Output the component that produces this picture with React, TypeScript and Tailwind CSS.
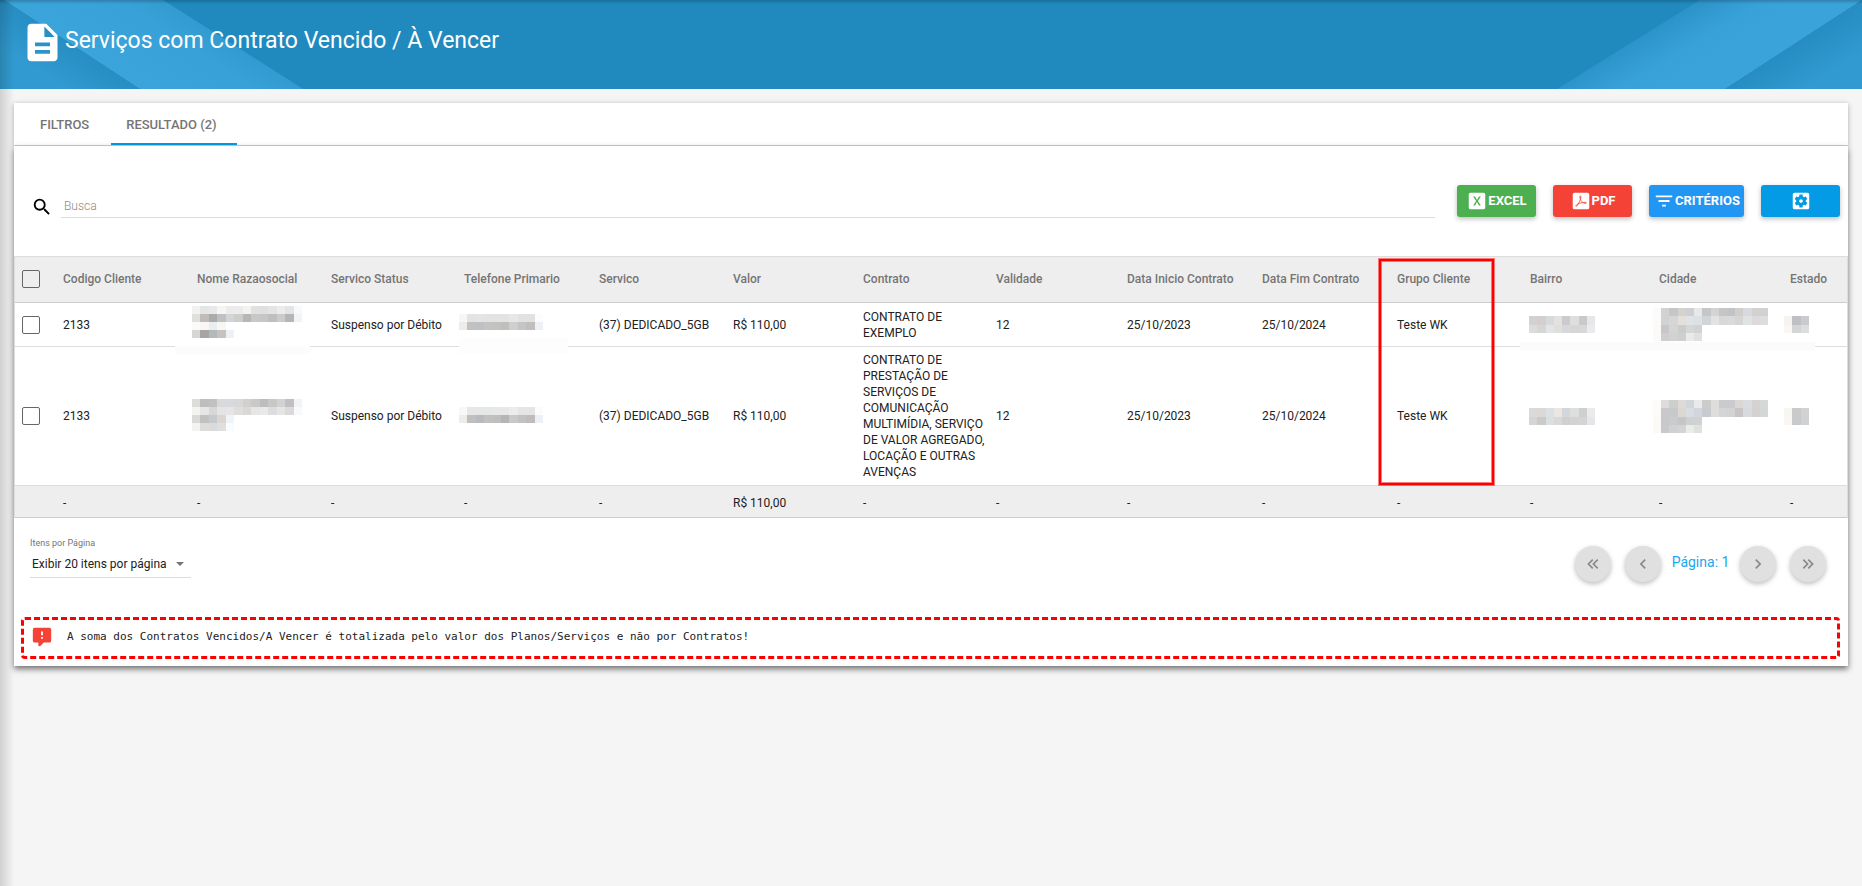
import type { ReactNode } from 'react';
import {
  MdChevronLeft,
  MdChevronRight,
  MdDescription,
  MdFilterList,
  MdSearch,
  MdSettingsApplications,
} from 'react-icons/md';

const columns = [
  { label: 'Codigo Cliente', width: 134 },
  { label: 'Nome Razaosocial', width: 134 },
  { label: 'Servico Status', width: 133 },
  { label: 'Telefone Primario', width: 135 },
  { label: 'Servico', width: 134 },
  { label: 'Valor', width: 130 },
  { label: 'Contrato', width: 133 },
  { label: 'Validade', width: 131 },
  { label: 'Data Inicio Contrato', width: 135 },
  { label: 'Data Fim Contrato', width: 135 },
  { label: 'Grupo Cliente', width: 133 },
  { label: 'Bairro', width: 129 },
  { label: 'Cidade', width: 131 },
  { label: 'Estado', width: 63 },
];

// Blocos de cor dos dados ocultos, uma string por linha ("." = vazio)
const nome1 = [
  'f2f2f0 e3e5e6 e6e8e9 f5f5f3 ebebec ececec f3f3f1 e1e1df dfdfdd e4e4e4 ececec e3e4e4 f8f9fb',
  'dfe0dd c1bcba acabab bfc0c2 d2d5d8 cdcdcb b9b6b4 c7c8c8 c5c7c6 c0bec0 c9cbcc b6b6b6 f1f3f6',
  'fafafa f8f7f6 ebeeef f7f7f5 . . . . . . . . .',
  'd6d6d2 a7a4a4 b3b9bb c6c2c0 ebf1f5 . . . . . . . .',
];
const nome2 = [
  'dcdcd8 bfbebf c2c0c1 d8d9da d7d9dd d8d8d8 d3cfcc c9c9c9 bdbdbe c7c7c6 d0d2d4 c1bfc1 f1f3f6',
  'f3f3f2 e7e6e6 d7d7d6 e4e4e5 e5e5e7 dfdedd d8d8d9 e6e6e6 e7eae9 dedcde e5e5e6 dadadc f8f9fa',
  'dadbd6 c1c1bf c4cacd dad7d2 f0f4f8 . . . . . . . .',
  'f3f3f1 dcdcdb d9dad9 dfdfdd f9fbfc . . . . . . . .',
];
const fone1 = [
  'f6f6f4 e2e4e3 e4e5e5 e3e3e3 e3e3e2 e3e3e1 e7e7e7 e2e2e3 e1e1e1 fafcfe',
  'efebe8 c3c1c0 bec0c5 c5c4c3 c2c2c1 bfbfbd ced0cf c7c5c4 c0bfbd edf1f5',
];
const fone2 = [
  'f8f8f6 e7e7e7 e6e8e8 e6e8e8 e8e8e7 e8e8e8 ececea e5e5e6 e5e5e5 fafcfe',
  'efebe8 c0bfbd b8babd c2c1bf bfbfbd b6b5b4 c7c9ca c4c2c0 bfbdbc edf1f5',
];
const bairro1 = ['d1d1d1 d4cfcc d7dadd e6e1dc c9cbcf dddfde c9c9ca e6e7e8', 'dcdcdb d5d6d6 e2e4e6 dedfdf d7d8d9 d6d6d6 d8d8d9 ebebed'];
const bairro2 = ['d9dad9 dbd8d6 dbe0e2 ebe6e2 d3d6da dddede cfcfcf ebebed', 'd5d5d4 c9cac9 dadfe0 d9dad8 d0d0d0 d3d3d2 d3d4d5 e5e6e7'];
const cidade1 = [
  'fcfbf9 d2d2d2 c5c6c7 d5d1ce ccd0d5 e7e8e8 c5c6c8 d5d4d5 c4c5c6 c2c3c4 d0cfce d7dade d3d1d0 d0d2d1',
  'fcfbf9 d1d2d2 d6d6d7 e4dfd9 dfe3e6 dde1e5 d0d5d9 e4e3e2 d9d8d7 dadadb d7d4d6 e0e2e4 dddad9 dcdedc',
  'fbfaf7 c7c7c9 d3d5d5 cdcccd d5d6d7 d1d3d2 . . . . . . . .',
  'fbfaf7 cfcdce d1d2d2 cfcfd0 e9ebea dfe0e0 . . . . . . . .',
];
const cidade2 = [
  'fcfbf9 dbdcdb cececd dedad7 d2d6da e9eaeb cdccca dedddb cacbcd cacbcf dad7d6 d9dce1 d5d2d1 d5d8d6',
  'fcfbf9 c9c8ca c7cacc dcd7d3 d8dde3 d2d5dc c7cacf dddddb d5d5d6 d2d3d2 c8c5c7 d8dadf d4d1d0 d5d7d6',
  'fbfaf7 c8c8ca cacbcc c6c6c7 cfd0d1 d0d1d1 . . . . . . . .',
  'fbfaf7 c9c9ca d0d1d1 d3d4d3 eaecea dfe0e0 . . . . . . . .',
];
const estado1 = ['f7f4f0 bec0c5 cacbcd', 'faf6f4 d4d5d5 dcdddd'];
const estado2 = ['f8f6f3 cacacb d1d2d3', 'faf6f3 c8c9ca d0d1d2'];

function Mosaic({ rows, width, height }: { rows: string[]; width: number; height: number }) {
  const cells = rows.map((row) => row.split(' '));
  return (
    <svg
      width={width}
      height={height}
      viewBox={`0 0 ${cells[0].length} ${cells.length}`}
      preserveAspectRatio="none"
      shapeRendering="crispEdges"
      className="block max-w-none"
      aria-hidden="true"
    >
      {cells.map((row, y) =>
        row.map((color, x) =>
          color === '.' ? null : <rect key={`${x}-${y}`} x={x} y={y} width="1" height="1" fill={`#${color}`} />
        )
      )}
    </svg>
  );
}

const rows = [
  {
    contrato: 'CONTRATO DE EXEMPLO',
    height: 'h-11',
    masked: 'pb-1.5',
    nome: nome1,
    fone: fone1,
    bairro: bairro1,
    cidade: cidade1,
    estado: estado1,
  },
  {
    contrato: 'CONTRATO DE PRESTAÇÃO DE SERVIÇOS DE COMUNICAÇÃO MULTIMÍDIA, SERVIÇO DE VALOR AGREGADO, LOCAÇÃO E OUTRAS AVENÇAS',
    height: 'h-[139px]',
    masked: 'pb-0.5',
    nome: nome2,
    fone: fone2,
    bairro: bairro2,
    cidade: cidade2,
    estado: estado2,
  },
];

function HeaderArt() {
  return (
    <>
      <svg className="absolute left-0 top-0" width="310" height="89" viewBox="0 0 310 89" aria-hidden="true">
        <defs>
          <linearGradient id="leftBand" gradientUnits="userSpaceOnUse" x1="90" y1="60" x2="150" y2="-30">
            <stop offset="0" stopColor="#3ba4da" />
            <stop offset="0.6" stopColor="#38a1d7" />
            <stop offset="1" stopColor="#2f97cc" />
          </linearGradient>
          <linearGradient id="leftCorner" gradientUnits="userSpaceOnUse" x1="72" y1="44" x2="50" y2="78">
            <stop offset="0" stopColor="#278dc2" />
            <stop offset="1" stopColor="#319ad0" />
          </linearGradient>
        </defs>
        <path d="M4 0H163L303 89H140Z" fill="url(#leftBand)" />
        <path d="M0 0H4L140 89H0Z" fill="url(#leftCorner)" />
      </svg>
      <svg className="absolute right-0 top-0" width="310" height="89" viewBox="0 0 310 89" aria-hidden="true">
        <defs>
          <linearGradient id="rightBand" gradientUnits="userSpaceOnUse" x1="75" y1="44" x2="104" y2="92">
            <stop offset="0" stopColor="#2c93c9" />
            <stop offset="0.6" stopColor="#38a1d7" />
            <stop offset="1" stopColor="#3aa3d9" />
          </linearGradient>
          <linearGradient id="rightCorner" gradientUnits="userSpaceOnUse" x1="240" y1="44" x2="264" y2="82">
            <stop offset="0" stopColor="#268cc1" />
            <stop offset="1" stopColor="#319ad0" />
          </linearGradient>
        </defs>
        <path d="M148 0H310L173 89H5Z" fill="url(#rightBand)" />
        <path d="M310 0V89H173Z" fill="url(#rightCorner)" />
      </svg>
    </>
  );
}

function ExcelIcon() {
  return (
    <svg width="22" height="22" viewBox="0 0 24 24" fill="currentColor" aria-hidden="true">
      <path d="M16.2 17H14.2L12 13.2L9.8 17H7.8L11 12L7.8 7H9.8L12 10.8L14.2 7H16.2L13 12M19 3H5C3.89 3 3 3.89 3 5V19A2 2 0 0 0 5 21H19A2 2 0 0 0 21 19V5C21 3.89 20.1 3 19 3Z" />
    </svg>
  );
}

function PdfIcon() {
  return (
    <svg width="22" height="22" viewBox="0 0 24 24" aria-hidden="true">
      <rect x="3" y="3" width="18" height="18" rx="2" fill="currentColor" />
      <path
        d="M11.3 6.3C10.3 6.5 10.7 8.6 11.3 10C12.1 12 13.6 13.8 15.4 14.4C16.6 14.8 17.9 14.8 17.9 14.1C17.9 13.2 15.4 13.3 13.4 13.7C11.4 14.1 9.1 14.8 7.7 15.7C6.5 16.5 6 17.4 6.5 17.7C7.3 18.1 8.7 16 9.8 13.8C10.9 11.7 11.9 9 11.9 7.4C11.9 6.7 11.7 6.3 11.3 6.3Z"
        fill="none"
        stroke="#f44336"
        strokeWidth="0.9"
      />
    </svg>
  );
}

function DoubleChevron({ right }: { right?: boolean }) {
  return (
    <svg width="20" height="20" viewBox="0 0 24 24" fill="currentColor" className={right ? 'rotate-180' : ''} aria-hidden="true">
      <path d="M18.41 7.41L17 6L11 12L17 18L18.41 16.59L13.83 12L18.41 7.41M12.41 7.41L11 6L5 12L11 18L12.41 16.59L7.83 12L12.41 7.41Z" />
    </svg>
  );
}

function ActionButton({ className, label, children }: { className: string; label?: string; children: ReactNode }) {
  return (
    <button
      type="button"
      aria-label={label}
      className={`flex h-8 shrink-0 items-center justify-center rounded-[3px] text-[13px] font-bold text-white shadow-[0_2px_5px_rgba(0,0,0,0.26)] ${className}`}
    >
      {children}
    </button>
  );
}

function PageButton({ label, children }: { label: string; children: ReactNode }) {
  return (
    <button
      type="button"
      aria-label={label}
      className="flex size-9 items-center justify-center rounded-full bg-[#e0e0e0] text-[#8a8a8a] shadow-[0_2px_5px_rgba(0,0,0,0.26)]"
    >
      {children}
    </button>
  );
}

function Checkbox({ label }: { label: string }) {
  return (
    <input
      type="checkbox"
      aria-label={label}
      className="ml-[7px] block size-[18px] appearance-none rounded-[2px] border border-[#666] bg-transparent"
    />
  );
}

export default function App() {
  return (
    <div className="relative min-h-screen bg-[#f5f5f5] font-['Roboto',sans-serif] text-[#212121]">
      <header className="relative h-[89px] overflow-hidden bg-[#208abf]">
        <HeaderArt />
        <div className="relative flex items-start pl-5 pt-5 text-white">
          <MdDescription size={45} />
          <h1 className="text-[23px] leading-[42px]">Serviços com Contrato Vencido / À Vencer</h1>
        </div>
        <div className="absolute inset-x-0 top-0 h-1 bg-linear-to-b from-black/20 to-transparent" />
      </header>

      <main className="mx-3.5 mt-3.5">
        <div role="tablist" className="flex h-[43px] border-b border-[#cfcfcf] bg-white pl-[2px] text-[13px] font-medium text-[#757575] shadow-[0_1px_5px_rgba(0,0,0,0.3)]">
          <button type="button" role="tab" aria-selected="false" className="pl-6 pr-[22px] pt-[2px]">
            FILTROS
          </button>
          <button type="button" role="tab" aria-selected="true" className="border-b-2 border-[#039be5] pl-[15px] pr-5 pt-1">
            RESULTADO (2)
          </button>
        </div>

        <section className="relative bg-white pb-[7px] shadow-[0_3px_6px_rgba(0,0,0,0.55)]">
          <div className="flex items-end pb-[38px] pl-[17px] pr-2 pt-[39px]">
            <MdSearch size={22} className="shrink-0 text-black" />
            <input
              type="text"
              aria-label="Busca"
              placeholder="Busca"
              className="ml-2 h-6 min-w-0 flex-1 border-b border-[#ddd] bg-transparent px-[3px] text-xs font-light outline-none placeholder:text-[#8a8a8a]"
            />
            <div className="mb-px ml-[22px] flex gap-[17px]">
              <ActionButton className="w-[79px] bg-[#4caf50]">
                <ExcelIcon />
                EXCEL
              </ActionButton>
              <ActionButton className="w-[79px] bg-[#f44336]">
                <PdfIcon />
                PDF
              </ActionButton>
              <ActionButton className="w-[95px] bg-[#2196f3]">
                <MdFilterList size={22} />
                CRITÉRIOS
              </ActionButton>
              <ActionButton className="w-[79px] bg-[#039be5]" label="Configurações">
                <MdSettingsApplications size={22} />
              </ActionButton>
            </div>
          </div>

          <div className="border-x border-t border-[#ddd]">
            <table className="w-full table-fixed border-separate border-spacing-0 text-left text-xs leading-4">
              <colgroup>
                <col style={{ width: 42 }} />
                {columns.map((column) => (
                  <col key={column.label} style={{ width: column.width }} />
                ))}
              </colgroup>
              <thead className="bg-[#eee] text-[#757575]">
                <tr className="h-[46px]">
                  <th className="border-b border-[#ccc] p-0 pb-0.5">
                    <Checkbox label="Selecionar todos" />
                  </th>
                  {columns.map((column) => (
                    <th key={column.label} className="relative whitespace-nowrap border-b border-[#ccc] px-1.5 pb-0.5 pt-0 font-medium">
                      {column.label}
                      {column.label === 'Grupo Cliente' && (
                        <span className="absolute -left-3 top-0.5 z-10 h-[226px] w-[115px] border-2 border-[#f00] shadow-[0_0_0_1px_rgba(255,0,0,0.5),inset_0_0_0_1px_rgba(255,0,0,0.5)]" />
                      )}
                    </th>
                  ))}
                </tr>
              </thead>
              <tbody className="[&_td]:border-b [&_td]:border-[#ddd]">
                {rows.map((row, i) => (
                  <tr key={row.contrato} className={row.height}>
                    <td>
                      <Checkbox label={`Selecionar linha ${i + 1}`} />
                    </td>
                    <td className="px-1.5">2133</td>
                    <td className={`relative pl-px ${row.masked}`}>
                      <Mosaic rows={row.nome} width={110} height={32} />
                      {i === 0 && <span className="absolute -bottom-2 -left-4 z-10 h-2 w-[135px] bg-[#fcfcfc]" />}
                    </td>
                    <td className="whitespace-nowrap px-1.5">Suspenso por Débito</td>
                    <td className={`relative pl-px ${row.masked}`}>
                      <Mosaic rows={row.fone} width={84} height={16} />
                      {i === 0 && <span className="absolute -bottom-2 left-px z-10 h-4 w-[109px] bg-[#fdfdfd]" />}
                    </td>
                    <td className="whitespace-nowrap px-1.5">(37) DEDICADO_5GB</td>
                    <td className="px-1.5">R$ 110,00</td>
                    <td className="pl-1.5">{row.contrato}</td>
                    <td className="px-1.5">12</td>
                    <td className="px-1.5">25/10/2023</td>
                    <td className="px-1.5">25/10/2024</td>
                    <td className="px-1.5">Teste WK</td>
                    <td className="relative pl-[5px]">
                      <Mosaic rows={row.bairro} width={66} height={17} />
                      {i === 0 && <span className="absolute -bottom-1 -left-1 z-10 h-2 w-[295px] bg-[#fbfbfb]" />}
                    </td>
                    <td>
                      <Mosaic rows={row.cidade} width={115} height={33} />
                    </td>
                    <td>
                      <Mosaic rows={row.estado} width={25} height={17} />
                    </td>
                  </tr>
                ))}
              </tbody>
              <tfoot className="bg-[#eee] [&_td]:border-b [&_td]:border-[#ccc]">
                <tr className="h-8">
                  <td />
                  {columns.map((column) => (
                    <td key={column.label} className="px-1.5 pt-0.5">
                      {column.label === 'Valor' ? 'R$ 110,00' : '-'}
                    </td>
                  ))}
                </tr>
              </tfoot>
            </table>
          </div>

          <div className="flex items-start justify-between pb-[35px] pl-4 pr-[22px] pt-[18px]">
            <div className="flex w-[161px] flex-col">
              <label htmlFor="itens" className="text-[9px] leading-[15px] text-[#757575]">
                Itens por Página
              </label>
              <div className="relative">
                <select id="itens" className="h-[27px] w-full appearance-none border-b border-[#ddd] bg-transparent pl-[2px] text-xs outline-none">
                  <option>Exibir 20 itens por página</option>
                </select>
                <svg width="8" height="4" viewBox="0 0 8 4" fill="#757575" className="pointer-events-none absolute right-[7px] top-[11px]" aria-hidden="true">
                  <path d="M0 0H8L4 4Z" />
                </svg>
              </div>
            </div>

            <nav aria-label="Paginação" className="flex items-center pt-2.5">
              <PageButton label="Primeira página">
                <DoubleChevron />
              </PageButton>
              <span className="w-3.5" />
              <PageButton label="Página anterior">
                <MdChevronLeft size={20} />
              </PageButton>
              <span className="w-[79px] pb-1 text-center text-sm text-[#1ba5ee]">Página: 1</span>
              <PageButton label="Próxima página">
                <MdChevronRight size={20} />
              </PageButton>
              <span className="w-3.5" />
              <PageButton label="Última página">
                <DoubleChevron right />
              </PageButton>
            </nav>
          </div>

          <div role="alert" className="mx-2 ml-[7px] flex h-[42px] items-center rounded border-[3px] border-dashed border-[#f00] pb-0.5 pl-[7px]">
            <svg width="22" height="22" viewBox="0 0 24 24" fill="#f44336" className="shrink-0" aria-hidden="true">
              <path d="M13 10H11V6H13V10M13 14H11V12H13V14M20 2H4A2 2 0 0 0 2 4V16A2 2 0 0 0 4 18H8V21A1 1 0 0 0 9 22H9.5C9.75 22 10 21.9 10.2 21.71L13.9 18H20A2 2 0 0 0 22 16V4C22 2.89 21.1 2 20 2Z" />
            </svg>
            <p className="ml-3.5 font-['DejaVu_Sans_Mono',monospace] text-[11px] leading-4">
              A soma dos Contratos Vencidos/A Vencer é totalizada pelo valor dos Planos/Serviços e não por Contratos!
            </p>
          </div>
        </section>
      </main>

      {/* sombra do menu lateral */}
      <div className="pointer-events-none absolute inset-y-0 left-0 w-3.5 bg-linear-to-r from-black/15 to-transparent" />
    </div>
  );
}
